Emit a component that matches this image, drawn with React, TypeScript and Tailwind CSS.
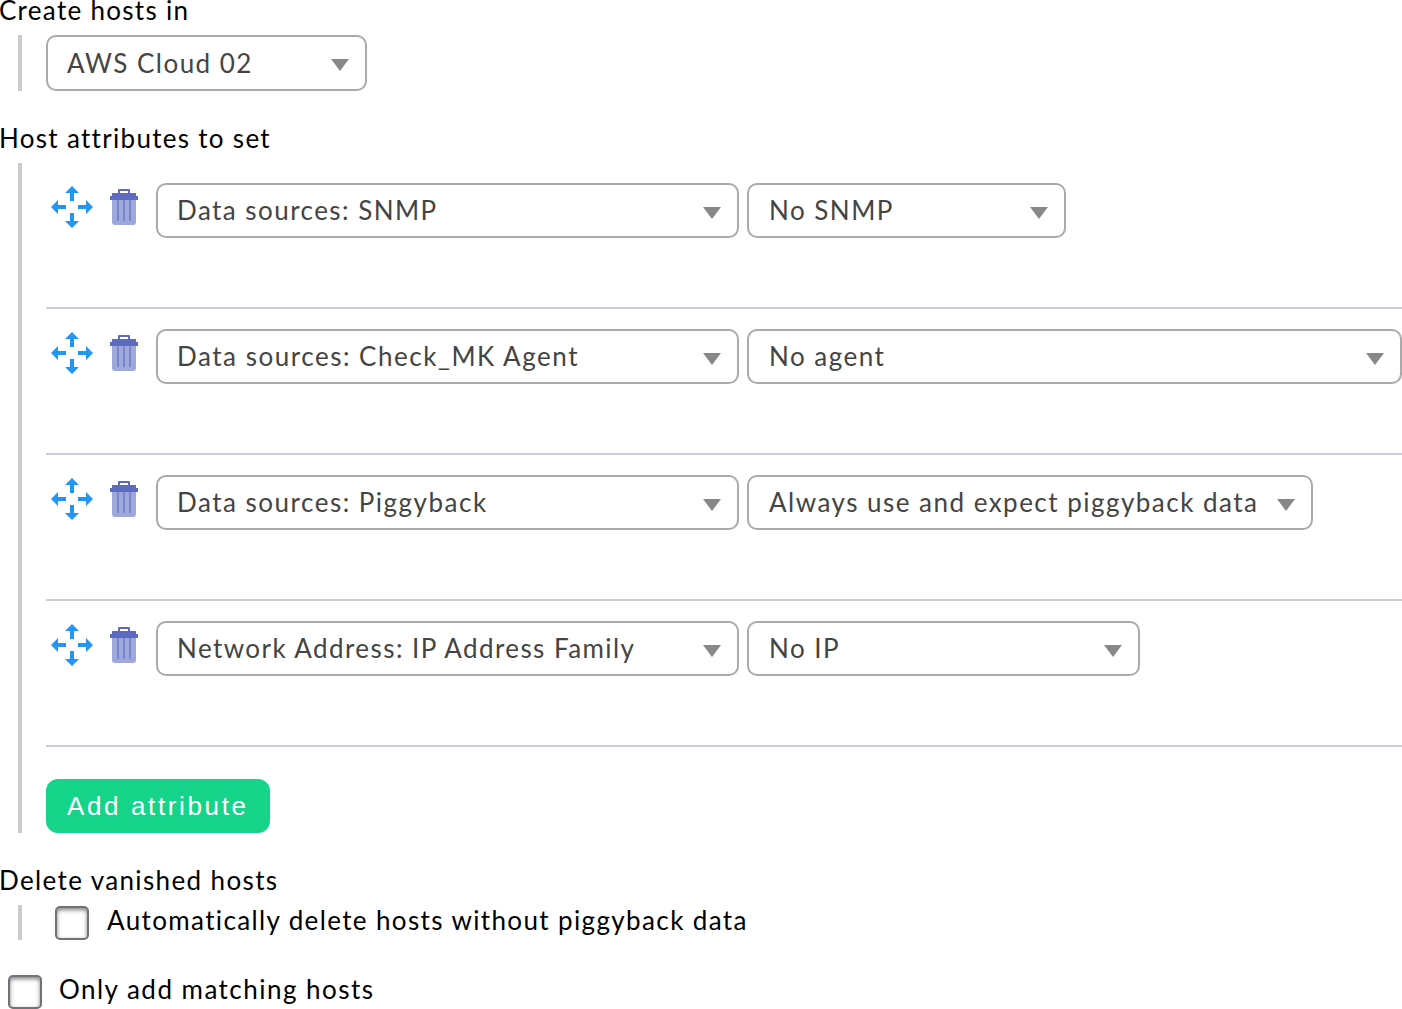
import React from "react";

function MoveIcon() {
  return (
    <svg className="block h-[42px] w-[42px] shrink-0" viewBox="0 0 42 42" fill="#2196f3">
      <path d="M21 0L28 7H23V15H19V7H14Z" />
      <path d="M21 42L14 35H19V27H23V35H28Z" />
      <path d="M0 21L7 14V19H15V23H7V28Z" />
      <path d="M42 21L35 28V23H27V19H35V14Z" />
    </svg>
  );
}

function TrashIcon() {
  return (
    <svg className="block h-[36px] w-[28px] shrink-0" viewBox="0 0 28 36">
      <path d="M2 10H26V33Q26 36 23 36H5Q2 36 2 33Z" fill="#9fa8da" />
      <path d="M7 10H9V32H7ZM13 10H15V32H13ZM19 10H21V32H19Z" fill="#7986cb" />
      <path d="M9 5V1H19V5" fill="none" stroke="#5c6bc0" strokeWidth="2" strokeLinejoin="round" />
      <path d="M2 4H26V7H28V11H0V7H2Z" fill="#5c6bc0" />
    </svg>
  );
}

function Select({ label, size, text = "tracking-[1.48px]" }: { label: string; size: string; text?: string }) {
  return (
    <button
      className={`flex shrink-0 items-center justify-between rounded-[10px] border-2 border-[#aaaaaa] bg-white pr-[16px] pl-[19px] text-left text-[#444444] ${size}`}
    >
      <span className={`mt-[-1px] whitespace-nowrap ${text}`}>{label}</span>
      <svg className="mt-[4px] h-[12px] w-[18px] shrink-0" viewBox="0 0 18 12">
        <path d="M0 0H18L9 12Z" fill="#888888" />
      </svg>
    </button>
  );
}

function Checkbox() {
  return (
    <span className="h-[34px] w-[34px] shrink-0 rounded-[5px] border-2 border-[#6f7377] bg-white shadow-[inset_0_2px_4px_rgba(0,0,0,0.5)]" />
  );
}

const attributes = [
  { name: "Data sources: SNMP", nameText: "tracking-[1.45px]", value: "No SNMP", size: "h-[55px] w-[319px]" },
  { name: "Data sources: Check_MK Agent", nameText: "tracking-[1.52px]", value: "No agent", size: "h-[55px] w-[655px]" },
  { name: "Data sources: Piggyback", nameText: "tracking-[1.5px]", value: "Always use and expect piggyback data", size: "h-[55px] w-[566px]" },
  { name: "Network Address: IP Address Family", nameText: "tracking-[1.43px]", value: "No IP", size: "h-[55px] w-[393px]" },
];

export default function App() {
  return (
    <main className="flex h-[1009px] w-[1402px] flex-col overflow-hidden bg-white font-['Lato',sans-serif] text-[26px] leading-[30px] tracking-[1.3px] text-black">
      <h2 className="-mt-[5px] -ml-px h-[40px] shrink-0">Create hosts in</h2>
      <div className="ml-[18px] h-[56px] shrink-0 border-l-4 border-[#cccccc] pl-[24px]">
        <Select label="AWS Cloud 02" size="h-[56px] w-[321px]" />
      </div>

      <h2 className="mt-[32px] -ml-px h-[40px] shrink-0">Host attributes to set</h2>
      <div className="ml-[18px] h-[670px] shrink-0 border-l-4 border-[#cccccc] pl-[24px]">
        {attributes.map((a) => (
          <div key={a.name} className="flex h-[146px] items-start border-b-2 border-[#cbcddc] pt-[20px]">
            <div className="mt-[3px] ml-[5px]">
              <MoveIcon />
            </div>
            <div className="mt-[6px] mr-[18px] ml-[17px]">
              <TrashIcon />
            </div>
            <div className="flex gap-[8px]">
              <Select label={a.name} size="h-[55px] w-[583px]" text={a.nameText} />
              <Select label={a.value} size={a.size} text="ml-px tracking-[1.48px]" />
            </div>
          </div>
        ))}
        <button className="mt-[32px] flex h-[54px] w-[224px] items-center rounded-[12px] bg-[#15d48a] pl-[21px] font-['Liberation_Sans',sans-serif] tracking-[2.63px] text-white">
          Add attribute
        </button>
      </div>

      <h2 className="mt-[32px] -ml-px h-[40px] shrink-0 tracking-[1.37px]">Delete vanished hosts</h2>
      <label className="ml-[18px] flex h-[35px] shrink-0 border-l-4 border-[#cccccc] pt-px pl-[33px] tracking-[1.37px]">
        <Checkbox />
        <span className="-mt-px ml-[18px]">Automatically delete hosts without piggyback data</span>
      </label>
      <label className="mt-[35px] ml-[8px] flex shrink-0 tracking-[1.47px]">
        <Checkbox />
        <span className="-mt-px ml-[17px]">Only add matching hosts</span>
      </label>
    </main>
  );
}
